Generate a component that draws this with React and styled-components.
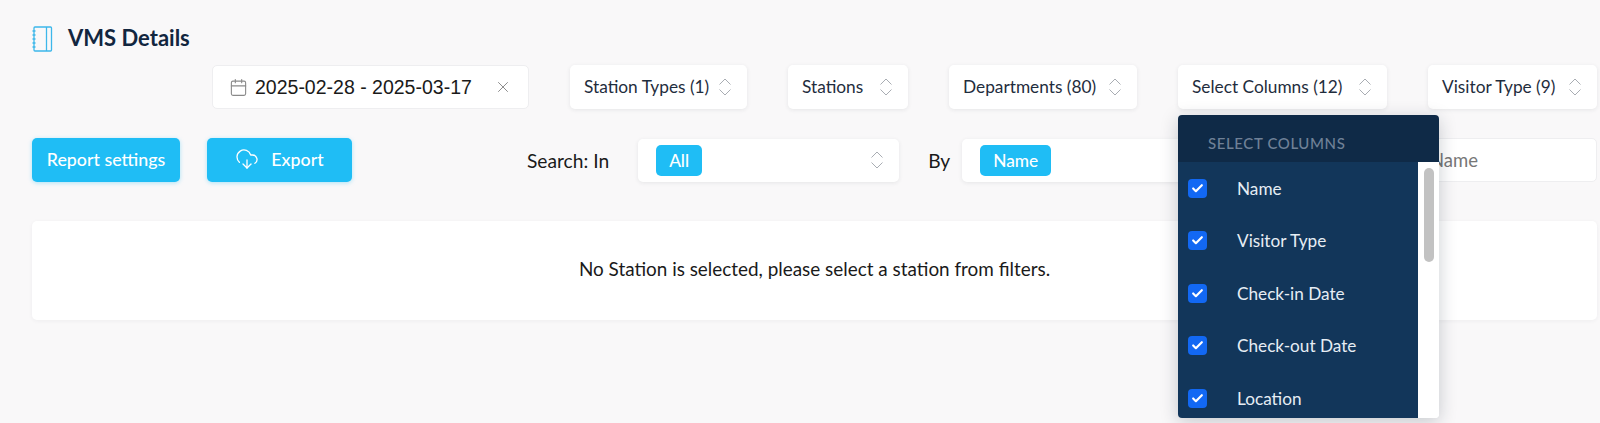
import styled, { createGlobalStyle } from "styled-components";
import { Calendar, Check, CloudDownload, X } from "lucide-react";

const GlobalStyle = createGlobalStyle`
  html, body {
    margin: 0;
    height: 100%;
    background: #f9f8f9;
    overflow: hidden;
  }
  body {
    font-family: "Lato", "Liberation Sans", sans-serif;
    color: #1c2a3a;
  }
`;

const Page = styled.div`
  height: 423px;
  box-sizing: border-box;
  padding: 26px 3px 0 32px;
  display: flex;
  flex-direction: column;
`;

const TitleRow = styled.div`
  display: flex;
  align-items: center;
  gap: 15px;
  height: 26px;
`;

const Title = styled.h1`
  margin: 0 0 2px;
  font-size: 22px;
  font-weight: 700;
  line-height: 24px;
  color: #12263f;
`;

const FilterRow = styled.div`
  display: flex;
  justify-content: flex-end;
  gap: 41px;
  margin-top: 13px;
`;

const ActionRow = styled.div`
  display: flex;
  align-items: center;
  margin-top: 29px;
`;

const Box = styled.div`
  display: flex;
  align-items: center;
  box-sizing: border-box;
  height: ${(p) => p.$height || 44}px;
  padding-bottom: 1px;
  background: #fff;
  border-radius: 5px;
  box-shadow: 0 1px 4px rgba(30, 40, 60, 0.09);
  font-size: 17.300px;
  color: #1f2d3d;
  white-space: nowrap;
`;

const DateBox = styled(Box)`
  width: 317px;
  padding: 0 16px;
  border: 1px solid #eeeef0;
  box-shadow: none;
  font-family: "Liberation Sans", sans-serif;
  font-size: 19.500px;
  color: #1a1a1a;
  svg:first-child {
    color: #8a8a8a;
    margin-right: 7px;
  }
  svg:last-child {
    color: #8a8a8a;
    margin-left: auto;
  }
`;

const SelectBox = styled(Box)`
  width: ${(p) => p.$width}px;
  padding: 0 14px 1px;
  justify-content: space-between;
`;

const SelectWrap = styled.div`
  position: relative;
`;

const Button = styled.button`
  display: flex;
  align-items: center;
  justify-content: center;
  gap: 12px;
  width: ${(p) => p.$width}px;
  height: 44px;
  margin-right: ${(p) => p.$gap || 0}px;
  padding: 0 0 2px;
  border: 0;
  border-radius: 5px;
  background: #1fbdf5;
  box-shadow: 0 1px 4px rgba(31, 189, 245, 0.35);
  color: #fff;
  font: inherit;
  font-size: 17.800px;
  font-weight: 500;
`;

const SearchLabel = styled.span`
  font-size: 19.200px;
  color: #1a1a1a;
  margin: ${(p) => p.$margin};
`;

const TagSelect = styled(Box)`
  width: ${(p) => p.$width}px;
  padding: 0 14px 0 18px;
  justify-content: space-between;
`;

const Tag = styled.span`
  display: inline-flex;
  align-items: center;
  height: 31px;
  padding: 0 ${(p) => p.$pad}px;
  border-radius: 5px;
  background: #1fbdf5;
  color: #fff;
  font-size: 17.300px;
  font-weight: 500;
`;

const SearchInput = styled(Box)`
  flex: 1;
  justify-content: flex-end;
  padding-right: 118px;
  margin-left: 20px;
  border: 1px solid #eeeef0;
  box-shadow: none;
  color: #777;
  font-size: 18.500px;
`;

const Card = styled.div`
  display: flex;
  align-items: center;
  justify-content: center;
  height: 99px;
  margin-top: 39px;
  padding-bottom: 4px;
  box-sizing: border-box;
  background: #fff;
  border-radius: 5px;
  box-shadow: 0 1px 4px rgba(30, 40, 60, 0.05);
  font-size: 18.900px;
  color: #1a1a1a;
`;

const Menu = styled.div`
  position: absolute;
  z-index: 5;
  top: 50px;
  left: 0;
  width: 261px;
  height: 303px;
  border-radius: 4px;
  overflow: hidden;
  background: #fff;
  box-shadow: 0 4px 18px rgba(20, 30, 50, 0.22);
  display: flex;
  flex-direction: column;
`;

const MenuHeader = styled.div`
  height: 47px;
  flex: none;
  box-sizing: border-box;
  padding: 20px 0 0 30px;
  background: #0f2a47;
  color: #6f8197;
  font-size: 15px;
  font-weight: 500;
  letter-spacing: 0.6px;
  line-height: 17px;
`;

const MenuBody = styled.div`
  flex: 1;
  display: flex;
  min-height: 0;
`;

const MenuList = styled.div`
  flex: 1;
  background: #12365a;
`;

const MenuItem = styled.div`
  display: flex;
  align-items: center;
  height: 52.500px;
  padding-left: 10px;
  gap: 30px;
  color: #e6edf4;
  font-size: 17.200px;
`;

const CheckBox = styled.span`
  display: flex;
  align-items: center;
  justify-content: center;
  width: 19px;
  height: 19px;
  border-radius: 4px;
  background: #1268f3;
  color: #fff;
`;

const ScrollTrack = styled.div`
  width: 21px;
  flex: none;
  box-sizing: border-box;
  padding: 6px 5px 0 6px;
  background: #fff;
`;

const ScrollThumb = styled.div`
  height: 94px;
  border-radius: 5px;
  background: #c2c2c2;
`;

const Updown = () => (
  <svg width="16" height="20" viewBox="0 0 16 20" fill="none" stroke="#a9adb3" strokeWidth="1">
    <path d="M2.500 7.500 8 2l5.500 5.500M2.500 12.500 8 18l5.500-5.500" />
  </svg>
);

const Notebook = () => (
  <svg width="21" height="26" viewBox="0 0 21 26" fill="none" stroke="#3db7ea" strokeWidth="1.300">
    <rect x="2" y="1" width="17.500" height="24" rx="1" />
    <path d="M14.500 1v24M.5 5h3M.5 9h3M.5 13h3M.5 17h3M.5 21h3" />
  </svg>
);

const columns = ["Name", "Visitor Type", "Check-in Date", "Check-out Date", "Location"];

const App = () => {
  return (
    <Page>
      <GlobalStyle />
      <TitleRow>
        <Notebook />
        <Title>VMS Details</Title>
      </TitleRow>

      <FilterRow>
        <DateBox>
          <Calendar size={19} strokeWidth={1.4} />
          2025-02-28 - 2025-03-17
          <X size={18} strokeWidth={1.3} />
        </DateBox>
        <SelectBox $width={177}>
          Station Types (1)
          <Updown />
        </SelectBox>
        <SelectBox $width={120}>
          Stations
          <Updown />
        </SelectBox>
        <SelectBox $width={188}>
          Departments (80)
          <Updown />
        </SelectBox>
        <SelectWrap>
          <SelectBox $width={209}>
            Select Columns (12)
            <Updown />
          </SelectBox>
          <Menu>
            <MenuHeader>SELECT COLUMNS</MenuHeader>
            <MenuBody>
              <MenuList>
                {columns.map((name) => (
                  <MenuItem key={name}>
                    <CheckBox>
                      <Check size={13} strokeWidth={4} />
                    </CheckBox>
                    {name}
                  </MenuItem>
                ))}
              </MenuList>
              <ScrollTrack>
                <ScrollThumb />
              </ScrollTrack>
            </MenuBody>
          </Menu>
        </SelectWrap>
        <SelectBox $width={169}>
          Visitor Type (9)
          <Updown />
        </SelectBox>
      </FilterRow>

      <ActionRow>
        <Button $width={148} $gap={27}>
          Report settings
        </Button>
        <Button $width={145}>
          <CloudDownload size={24} strokeWidth={1.3} />
          Export
        </Button>
        <SearchLabel $margin="0 29px 0 175px">Search: In</SearchLabel>
        <TagSelect $width={261} $height={43}>
          <Tag $pad={13}>All</Tag>
          <Updown />
        </TagSelect>
        <SearchLabel $margin="0 12px 0 29px">By</SearchLabel>
        <TagSelect $width={270} $height={43}>
          <Tag $pad={13}>Name</Tag>
        </TagSelect>
        <SearchInput>Name</SearchInput>
      </ActionRow>

      <Card>No Station is selected, please select a station from filters.</Card>
    </Page>
  );
};

export default App;
